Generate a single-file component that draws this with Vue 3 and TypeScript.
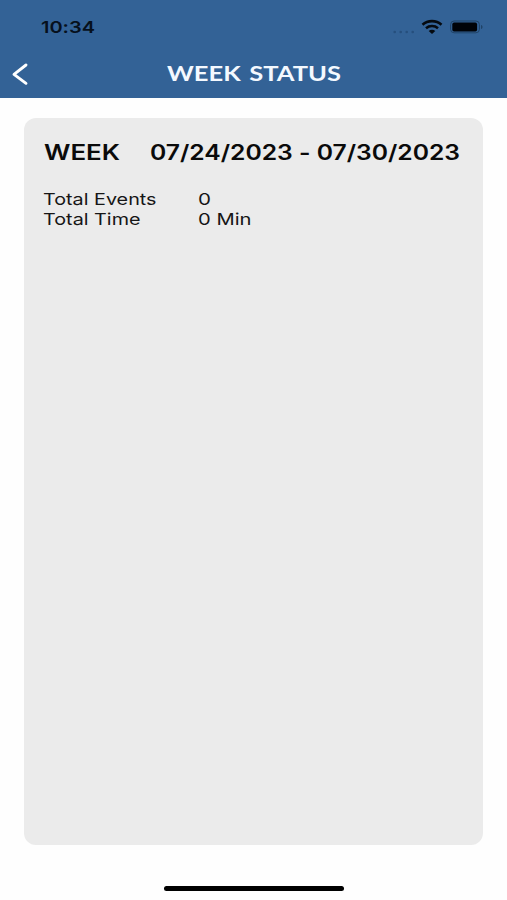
<script setup lang="ts">
interface Row {
  label: string
  labelWidth: number
  value: string
  valueWidth: number
}

const rows: Row[] = [
  { label: 'Total Events', labelWidth: 113.5, value: '0', valueWidth: 13 },
  { label: 'Total Time', labelWidth: 97.5, value: '0 Min', valueWidth: 53.5 },
]
</script>

<template>
  <main class="screen">
    <header class="header">
      <div class="status">
        <svg class="time" width="54" height="20"><text x="0" y="16.3" textLength="54" lengthAdjust="spacingAndGlyphs">10:34</text></svg>
        <div class="indicators">
          <svg class="dots" width="22" height="4" viewBox="0 0 22 4">
            <circle cx="1.7" cy="2" r="1.3" /><circle cx="7.7" cy="2" r="1.3" /><circle cx="13.7" cy="2" r="1.3" /><circle cx="19.7" cy="2" r="1.3" />
          </svg>
          <svg class="wifi" width="22" height="14" viewBox="0 0 22 14">
            <path d="M1.5 4.700C6.800-.1 15.200-.1 20.500 4.700M5 8.200c3.400-2.900 8.600-2.900 12 0" fill="none" stroke="#050a10" stroke-width="2.6" />
            <path d="M7.700 10.900c1.800-1.600 4.800-1.600 6.600 0L11 13.900Z" fill="#050a10" />
          </svg>
          <svg class="battery" width="34" height="14" viewBox="0 0 34 14">
            <rect x=".6" y="1" width="28.8" height="11.8" rx="3.5" fill="none" stroke="#204367" stroke-width="1" />
            <rect x="2.3" y="2.6" width="24.8" height="8.900" rx="1.800" fill="#000308" />
            <path d="M31 5c2 .5 2 3.500 0 4Z" fill="#204367" />
          </svg>
        </div>
      </div>
      <nav class="nav">
        <button class="back" aria-label="Back">
          <svg width="16" height="22" viewBox="0 0 16 22"><path d="M14 2 2 11.300l12 9" fill="none" stroke="#fff" stroke-width="2.900" stroke-linecap="round" stroke-linejoin="round" /></svg>
        </button>
        <svg class="title" width="174" height="24"><text x="0" y="19" textLength="174" lengthAdjust="spacingAndGlyphs">WEEK STATUS</text></svg>
      </nav>
    </header>
    <section class="card">
      <div class="heading">
        <svg width="76" height="24"><text x="0" y="19" textLength="76" lengthAdjust="spacingAndGlyphs">WEEK</text></svg>
        <svg width="310" height="24"><text x="0" y="19" textLength="310" lengthAdjust="spacingAndGlyphs">07/24/2023 - 07/30/2023</text></svg>
      </div>
      <div v-for="row in rows" :key="row.label" class="row">
        <svg width="155.500" height="20.3"><text x="0" y="15" :textLength="row.labelWidth" lengthAdjust="spacingAndGlyphs">{{ row.label }}</text></svg>
        <svg width="60" height="20.3"><text x="0" y="15" :textLength="row.valueWidth" lengthAdjust="spacingAndGlyphs">{{ row.value }}</text></svg>
      </div>
    </section>
    <div class="home-indicator"></div>
  </main>
</template>

<style>
body {
  margin: 0;
  background: #fff;
}
</style>

<style scoped>
.screen {
  box-sizing: border-box;
  width: 507px;
  height: 900px;
  display: flex;
  flex-direction: column;
  align-items: center;
  background: #fefefe;
  font-family: Inter, "Liberation Sans", sans-serif;
  font-feature-settings: "calt" 0;
}
svg {
  display: block;
  flex: none;
  overflow: visible;
}
.header {
  box-sizing: border-box;
  width: 100%;
  height: 97.500px;
  padding-top: 17px;
  background: #336296;
}
.status {
  display: flex;
  justify-content: space-between;
  height: 40px;
  padding: 0 23px 0 41px;
}
.time {
  font-size: 16.5px;
  font-weight: 600;
  fill: #06101c;
}
.indicators {
  display: flex;
}
.dots {
  margin: 12.500px 6.500px 0 0;
  fill: #264f7d;
}
.wifi {
  margin: 3px 7px 0 0;
}
.battery {
  margin-top: 3.300px;
}
.nav {
  display: grid;
  grid-template-columns: 166.500px 174px 1fr;
  height: 36px;
  align-items: start;
}
.back {
  width: 16px;
  height: 22px;
  margin: 6.300px 0 0 12px;
  padding: 0;
  border: 0;
  background: none;
}
.title {
  margin-top: 4.600px;
  font-family: Lato, sans-serif;
  font-size: 21px;
  font-weight: 700;
  word-spacing: 2px;
  fill: #f4f9ff;
}
.card {
  box-sizing: border-box;
  width: 459.500px;
  height: 727px;
  margin-top: 20px;
  padding: 23.400px 19px 0;
  border-radius: 12px;
  background: #ebebeb;
}
.heading {
  display: flex;
  gap: 30.500px;
  height: 49px;
  padding-left: 1px;
  font-size: 20.800px;
  font-weight: 600;
  fill: #0a0a0a;
}
.row {
  display: flex;
  height: 20.300px;
  font-size: 16.500px;
  fill: #161616;
}
.home-indicator {
  width: 180px;
  height: 5.400px;
  margin-top: 41.300px;
  border-radius: 3px;
  background: #000;
}
</style>
